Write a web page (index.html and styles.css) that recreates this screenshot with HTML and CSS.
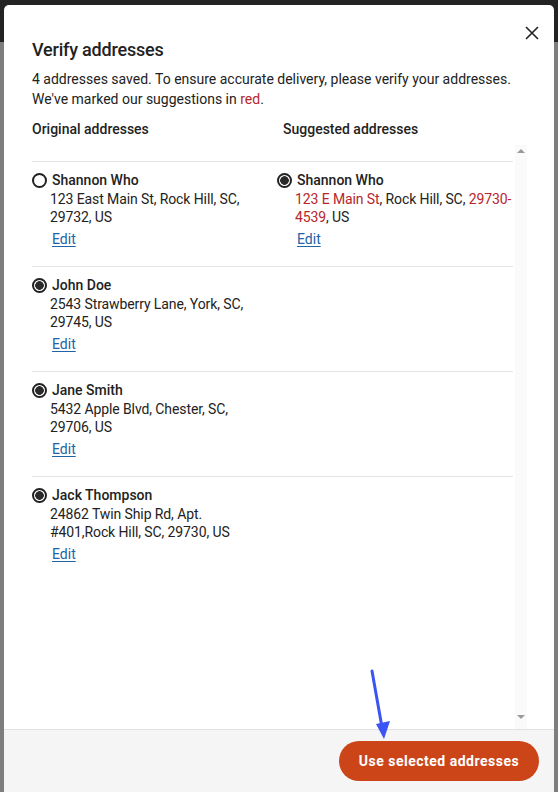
FILE: index.html
```html
<!DOCTYPE html>
<html lang="en">
<head>
<meta charset="utf-8">
<title>Verify addresses</title>
<link rel="stylesheet" href="styles.css">
</head>
<body>
<div class="page">
  <div class="modal">
    <div class="modal-head">
      <h1 class="title">Verify addresses</h1>
      <button class="close" aria-label="Close">
        <svg width="14" height="14" viewBox="0 0 14 14"><path d="M1 1L13 13M13 1L1 13" stroke="#222" stroke-width="1.6" fill="none"/></svg>
      </button>
    </div>
    <p class="desc"><span>4 addresses saved. To ensure accurate delivery, please verify your addresses.</span> <span>We've marked our suggestions in</span> <span class="red">red</span><span>.</span></p>
    <div class="col-heads">
      <div>Original addresses</div>
      <div>Suggested addresses</div>
    </div>
    <div class="scroll">
      <div class="list">
        <div class="row">
          <label class="addr">
            <span class="radio"></span>
            <span class="body">
              <span class="name">Shannon Who</span>
              <span class="lines">123 East Main St, Rock Hill, SC, 29732, US</span>
              <a class="edit" href="#">Edit</a>
            </span>
          </label>
          <label class="addr">
            <span class="radio on"></span>
            <span class="body">
              <span class="name">Shannon Who</span>
              <span class="lines"><span class="red">123 E Main St</span>, Rock Hill, SC, <span class="red">29730-<wbr>4539</span>, US</span>
              <a class="edit" href="#">Edit</a>
            </span>
          </label>
        </div>
        <div class="row">
          <label class="addr">
            <span class="radio on"></span>
            <span class="body">
              <span class="name">John Doe</span>
              <span class="lines">2543 Strawberry Lane, York, SC, 29745, US</span>
              <a class="edit" href="#">Edit</a>
            </span>
          </label>
        </div>
        <div class="row">
          <label class="addr">
            <span class="radio on"></span>
            <span class="body">
              <span class="name">Jane Smith</span>
              <span class="lines">5432 Apple Blvd, Chester, SC, 29706, US</span>
              <a class="edit" href="#">Edit</a>
            </span>
          </label>
        </div>
        <div class="row last">
          <label class="addr">
            <span class="radio on"></span>
            <span class="body">
              <span class="name">Jack Thompson</span>
              <span class="lines">24862 Twin Ship Rd, Apt. #401,Rock Hill, SC, 29730, US</span>
              <a class="edit" href="#">Edit</a>
            </span>
          </label>
        </div>
      </div>
      <div class="scrollbar">
        <span class="tri up"></span>
        <span class="tri down"></span>
      </div>
    </div>
    <div class="foot">
      <button class="primary">Use selected addresses</button>
    </div>
    <svg class="arrow" width="30" height="80" viewBox="0 0 30 80">
      <path d="M4 2L15 64" stroke="#3a55f4" stroke-width="3" fill="none" stroke-linecap="round"/>
      <path d="M8 55L22 52L16 70Z" fill="#3a55f4"/>
    </svg>
  </div>
</div>
</body>
</html>
```
FILE: styles.css
```css
* { box-sizing: border-box; }
html, body { margin: 0; padding: 0; }
body {
  width: 558px;
  height: 792px;
  overflow: hidden;
  font-family: Roboto, "Liberation Sans", Arial, sans-serif;
  color: #222;
  background: linear-gradient(#232323 0 42px, #7e7e7e 42px 100%);
}
.page {
  padding: 5px 4px 0 4px;
}
.modal {
  position: relative;
  width: 550px;
  height: 787px;
  background: #fff;
  border-radius: 5px 5px 0 0;
  display: flex;
  flex-direction: column;
}
.modal-head {
  display: flex;
  align-items: flex-start;
  justify-content: space-between;
  padding: 16px 10px 0 28px;
}
.title {
  margin: 17px 0 0;
  font-size: 18px;
  line-height: 24px;
  font-weight: 500;
  letter-spacing: -0.2px;
  color: #222;
}
.close {
  width: 24px;
  height: 24px;
  border: 0;
  background: none;
  padding: 0;
  display: flex;
  align-items: center;
  justify-content: center;
}
.desc {
  margin: 7px 28px 0;
  font-size: 14px;
  line-height: 20px;
  color: #222;
}
.red { color: #b8262b; }
.col-heads {
  margin: 10px 29px 0 28px;
  display: grid;
  grid-template-columns: 1fr 1fr;
  column-gap: 9px;
  font-size: 14px;
  line-height: 20px;
  font-weight: 500;
}
.scroll {
  flex: 1;
  margin: 6px 27px 0 28px;
  display: flex;
}
.list {
  flex: 1;
  padding-top: 16px;
}
.row {
  display: grid;
  grid-template-columns: 228px 1fr;
  column-gap: 17px;
  border-top: 1px solid #e4e4e4;
  padding: 8px 0 17px;
  margin-right: 2px;
}
.addr {
  display: flex;
  align-items: flex-start;
}
.radio {
  flex: none;
  width: 15px;
  height: 15px;
  margin: 3px 3px 0 0;
  border: 2px solid #222;
  border-radius: 50%;
  background: #fff;
}
.radio.on {
  background: radial-gradient(circle, #2a2a2a 0 4px, #fff 4.6px);
}
.body {
  display: flex;
  flex-direction: column;
  font-size: 14px;
  margin-right: -4px;
}
.name {
  font-weight: 500;
  line-height: 20px;
  padding-left: 2px;
}
.lines {
  line-height: 18px;
  letter-spacing: -0.1px;
}
.edit {
  margin: 3px 0 0 2px;
  line-height: 20px;
  color: #2263a6;
  text-decoration: underline;
  text-underline-offset: 2px;
  align-self: flex-start;
}
.scrollbar {
  width: 12px;
  background: #fafafa;
  display: flex;
  flex-direction: column;
  justify-content: space-between;
  align-items: center;
  padding: 4px 0 10px;
}
.tri {
  width: 0;
  height: 0;
  border-left: 4px solid transparent;
  border-right: 4px solid transparent;
}
.tri.up { border-bottom: 4px solid #9a9a9a; }
.tri.down { border-top: 4px solid #9a9a9a; }
.foot {
  height: 63px;
  border-top: 1px solid #e2e2e2;
  background: #f5f5f5;
  display: flex;
  justify-content: flex-end;
  align-items: flex-start;
  padding: 11px 15px 0 0;
}
.primary {
  height: 40px;
  width: 200px;
  border: 0;
  border-radius: 20px;
  background: #cc4519;
  color: #fff;
  font-family: inherit;
  font-size: 14px;
  font-weight: 700;
  letter-spacing: 0.5px;
}
.arrow {
  position: absolute;
  left: 364px;
  top: 664px;
}
```
